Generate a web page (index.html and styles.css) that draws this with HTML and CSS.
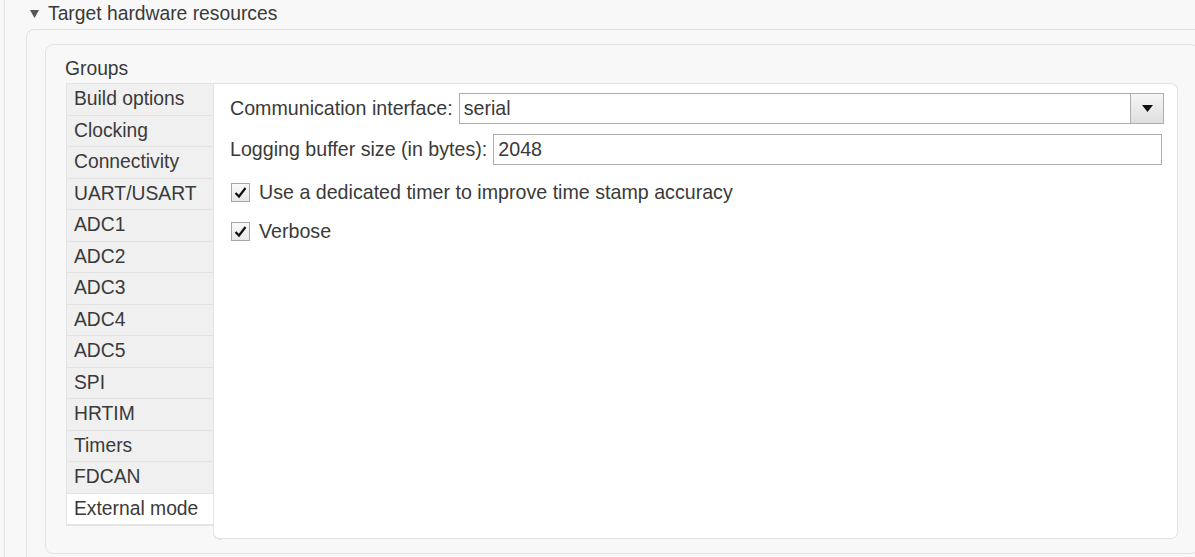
FILE: index.html
```html
<!DOCTYPE html>
<html lang="en">
<head>
    <meta charset="UTF-8">
    <title>Target hardware resources</title>
    <link rel="stylesheet" href="styles.css">
</head>
<body>
    <div class="page">
        <div class="section-title">
            <svg class="caret" width="9" height="8" viewBox="0 0 9 8"><polygon points="0,0 9,0 4.5,8" fill="#555"/></svg>
            <span>Target hardware resources</span>
        </div>
        <div class="outer-panel">
            <div class="inner-panel">
                <div class="groups-label">Groups</div>
                <div class="groups">
                    <div class="tab-list">
                        <div class="tab">Build options</div>
                        <div class="tab">Clocking</div>
                        <div class="tab">Connectivity</div>
                        <div class="tab">UART/USART</div>
                        <div class="tab">ADC1</div>
                        <div class="tab">ADC2</div>
                        <div class="tab">ADC3</div>
                        <div class="tab">ADC4</div>
                        <div class="tab">ADC5</div>
                        <div class="tab">SPI</div>
                        <div class="tab">HRTIM</div>
                        <div class="tab">Timers</div>
                        <div class="tab">FDCAN</div>
                        <div class="tab active">External mode</div>
                    </div>
                    <div class="tab-content">
                        <div class="field-row">
                            <label class="field-label">Communication interface:</label>
                            <div class="select-box">
                                <span class="select-value">serial</span>
                                <span class="select-button">
                                    <svg width="11" height="7" viewBox="0 0 11 7"><polygon points="0,0 11,0 5.5,7" fill="#111"/></svg>
                                </span>
                            </div>
                        </div>
                        <div class="field-row">
                            <label class="field-label">Logging buffer size (in bytes):</label>
                            <div class="text-box">2048</div>
                        </div>
                        <div class="check-row first">
                            <span class="check-box">
                                <svg width="13" height="13" viewBox="0 0 13 13"><path d="M1.5 7 L5 10.5 L11.5 2" fill="none" stroke="#111" stroke-width="2.2"/></svg>
                            </span>
                            <span>Use a dedicated timer to improve time stamp accuracy</span>
                        </div>
                        <div class="check-row">
                            <span class="check-box">
                                <svg width="13" height="13" viewBox="0 0 13 13"><path d="M1.5 7 L5 10.5 L11.5 2" fill="none" stroke="#111" stroke-width="2.2"/></svg>
                            </span>
                            <span>Verbose</span>
                        </div>
                    </div>
                </div>
            </div>
        </div>
    </div>
</body>
</html>
```

FILE: styles.css
```css
body {
    margin: 0;
    background-color: #f8f8f8;
    font-family: 'Liberation Sans', Arial, sans-serif;
    font-size: 19.3px;
    color: #3a3a3a;
    overflow: hidden;
}
.page {
    margin-left: 4px;
    border-left: 1px solid #e2e2e2;
    height: 557px;
}
.section-title {
    height: 29px;
    display: flex;
    align-items: center;
    padding-left: 25px;
    box-sizing: border-box;
    padding-bottom: 1px;
}
.caret {
    margin-right: 9px;
}
.outer-panel {
    margin-left: 21px;
    width: 1192px;
    height: 528px;
    border: 1px solid #e3e3e3;
    border-bottom: none;
    border-radius: 8px 8px 0 0;
    padding: 14px 0 0 18px;
    box-sizing: border-box;
}
.inner-panel {
    width: 1154px;
    height: 510px;
    border: 1px solid #e3e3e3;
    border-radius: 8px;
    padding: 0 20px 0 20px;
    box-sizing: border-box;
}
.groups-label {
    height: 38px;
    line-height: 22px;
    padding-top: 13px;
    box-sizing: border-box;
    margin-left: -1px;
}
.groups {
    display: flex;
    align-items: flex-start;
}
.tab-list {
    width: 147px;
    border: 1px solid #e3e3e3;
    border-right: none;
    flex-shrink: 0;
}
.tab {
    height: 30.5px;
    line-height: 30px;
    padding-left: 7px;
    background-color: #f0f0f0;
    border-bottom: 1px solid #e3e3e3;
    border-right: 1px solid #e3e3e3;
}
.tab.active {
    background-color: #ffffff;
    border-right-color: #ffffff;
}
.tab-content {
    flex: 1;
    height: 456px;
    background-color: #ffffff;
    border: 1px solid #e3e3e3;
    border-left: none;
    border-radius: 0 7px 7px 7px;
    box-sizing: border-box;
    padding: 9px 0 0 17px;
    margin-left: -1px;
    position: relative;
    font-size: 19.65px;
}
.tab-content::before {
    content: '';
    position: absolute;
    left: 0;
    top: -1px;
    width: 1px;
    height: 442px;
    background-color: #e3e3e3;
}
.tab-content::after {
    content: '';
    position: absolute;
    left: 0;
    top: 440px;
    width: 8px;
    height: 15px;
    border-left: 1px solid #e3e3e3;
    border-bottom: 1px solid #e3e3e3;
    border-radius: 0 0 0 7px;
}
.field-row {
    display: flex;
    align-items: center;
    height: 31px;
    margin-bottom: 10px;
}
.field-label {
    margin-right: 6px;
    white-space: nowrap;
}
.select-box {
    flex: 1;
    display: flex;
    height: 31px;
    border: 1px solid #adadad;
    box-sizing: border-box;
    margin-right: 13px;
}
.select-value {
    flex: 1;
    padding-left: 4px;
    line-height: 28px;
}
.select-button {
    width: 32px;
    border-left: 1px solid #adadad;
    background: linear-gradient(#f6f6f6, #dedede);
    display: flex;
    align-items: center;
    justify-content: center;
}
.text-box {
    flex: 1;
    height: 31px;
    line-height: 28px;
    padding-left: 4px;
    border: 1px solid #adadad;
    box-sizing: border-box;
    margin-right: 15px;
}
.check-row {
    display: flex;
    align-items: center;
    height: 28px;
    margin-top: 11px;
}
.check-row.first {
    margin-top: 13.5px;
}
.check-box {
    width: 19px;
    height: 19px;
    box-sizing: border-box;
    border: 1px solid #a6a6a6;
    background: linear-gradient(#fafafa, #e8e8e8);
    display: flex;
    align-items: center;
    justify-content: center;
    margin-left: 1px;
    margin-right: 9px;
}
```
